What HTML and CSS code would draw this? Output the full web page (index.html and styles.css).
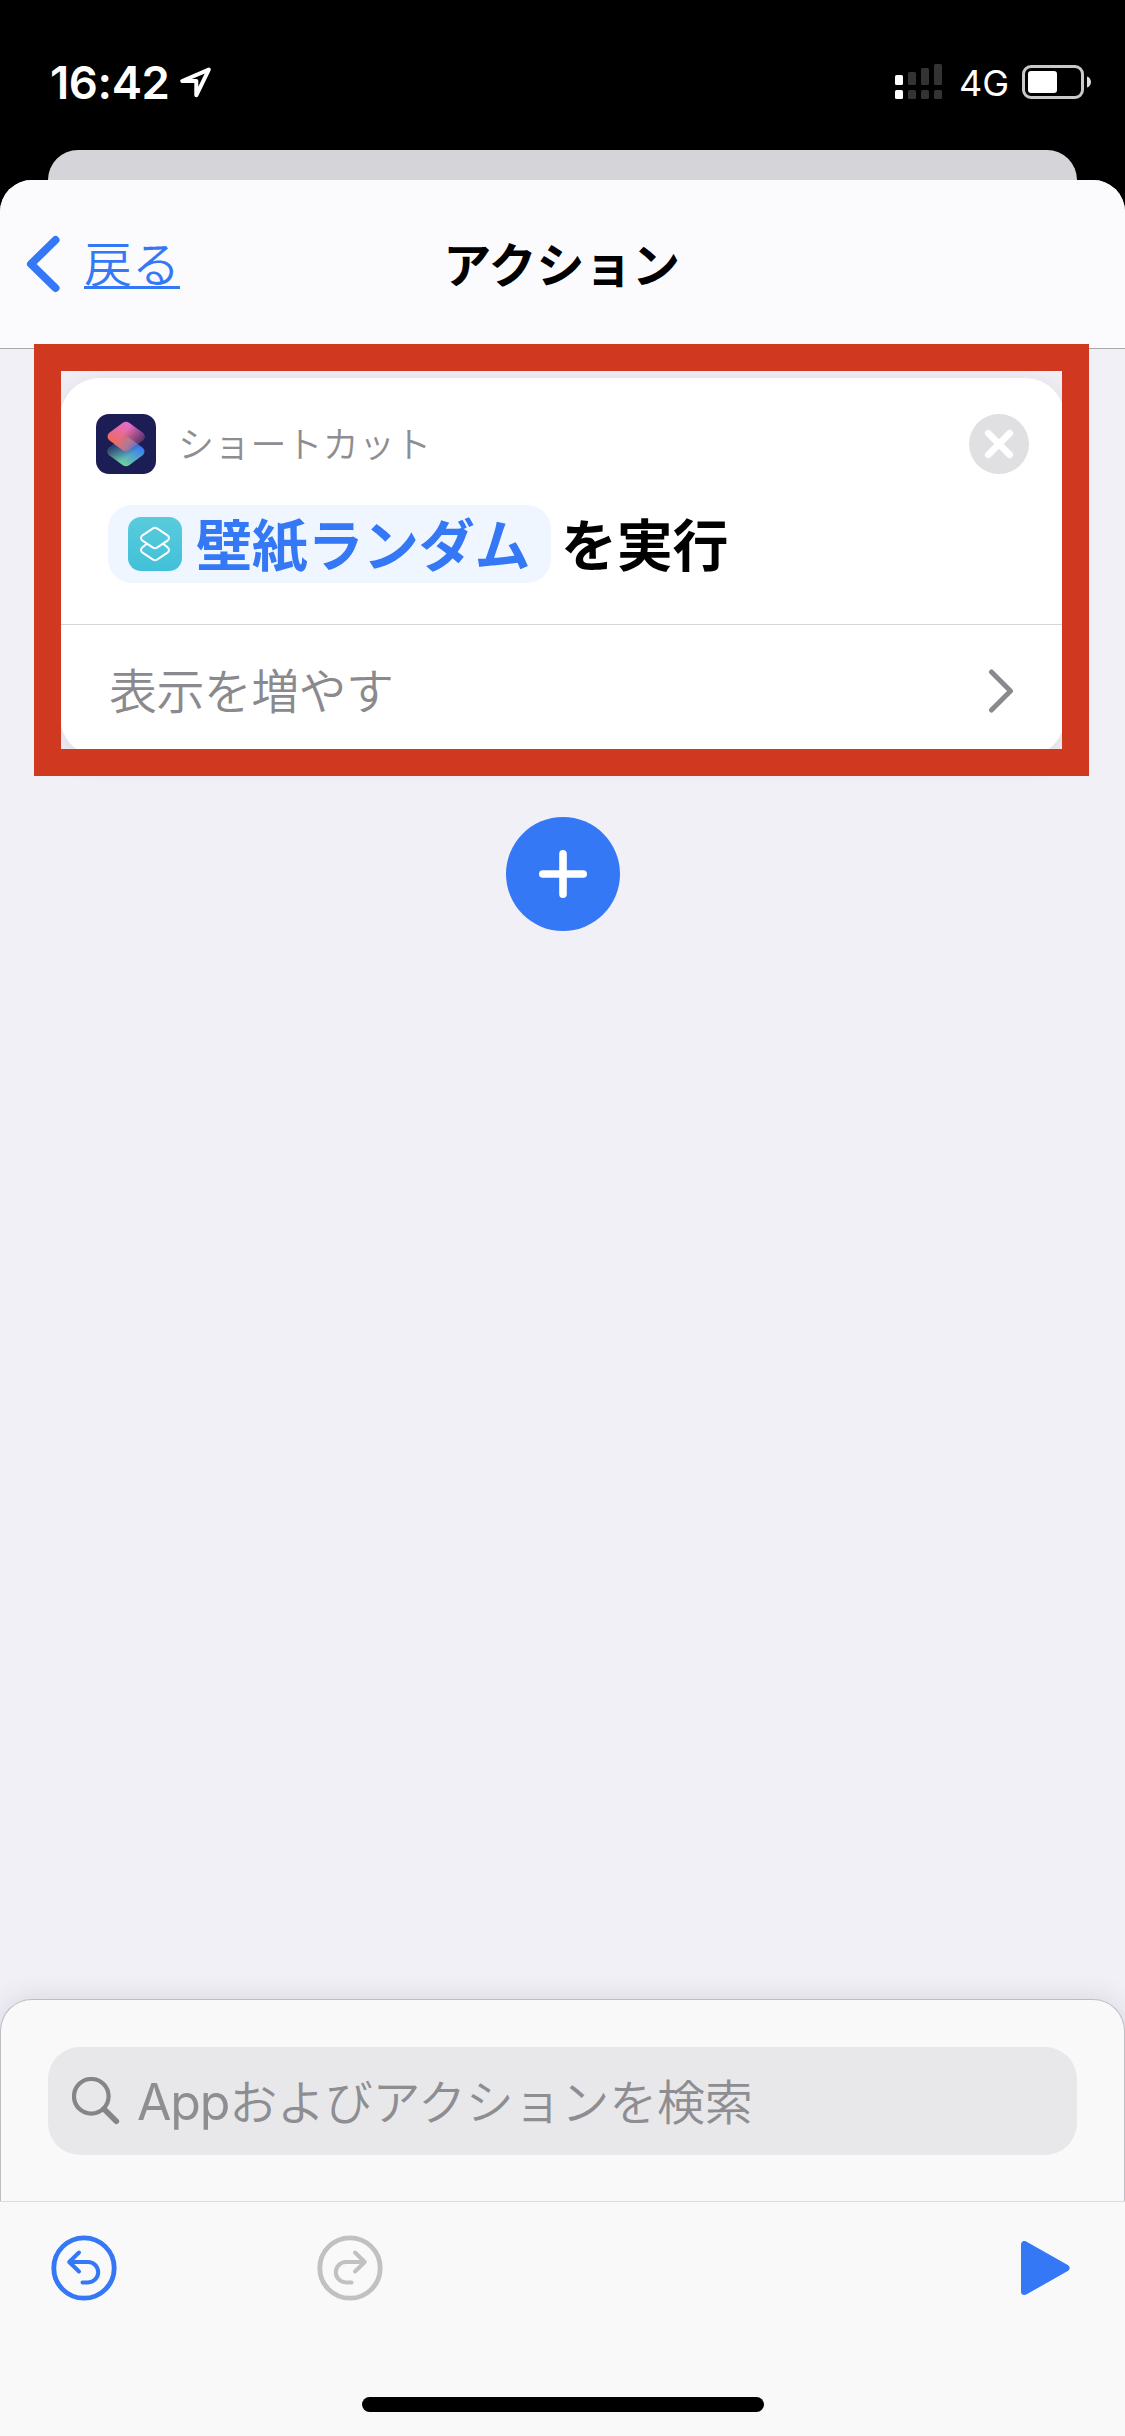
FILE: index.html
```html
<!DOCTYPE html>
<html lang="ja">
<head>
    <meta charset="UTF-8">
    <meta name="viewport" content="width=device-width, initial-scale=1.0">
    <title>アクション</title>
    <link rel="stylesheet" href="styles.css">
</head>
<body>
    <header class="status-bar">
        <div class="status-left">
            <span class="time">16:42</span>
            <svg class="location" width="34" height="34" viewBox="0 0 34 34">
                <path d="M30.8 4.6 L4.2 16 H18.3 V30.3 Z" />
            </svg>
        </div>
        <div class="status-right">
            <svg width="48" height="36" viewBox="0 0 48 36">
                <g fill="#fff">
                    <rect x="0" y="11" width="8" height="10" rx="1.5" />
                    <rect x="0" y="26" width="8" height="9" rx="1.5" />
                </g>
                <g fill="#333">
                    <rect x="13" y="8" width="8" height="13" rx="1.5" />
                    <rect x="26" y="4" width="8" height="17" rx="1.5" />
                    <rect x="39" y="0" width="8" height="21" rx="1.5" />
                    <rect x="13" y="26" width="8" height="9" rx="1.5" />
                    <rect x="26" y="26" width="8" height="9" rx="1.5" />
                    <rect x="39" y="26" width="8" height="9" rx="1.5" />
                </g>
            </svg>
            <span class="network">4G</span>
            <svg width="70" height="34" viewBox="0 0 70 34">
                <rect x="1.5" y="1.5" width="59" height="31" rx="7.5" fill="none" stroke="#c9c9c9" stroke-width="3" />
                <rect x="6" y="6" width="29" height="22" rx="3" fill="#fff" />
                <path d="M65 11.5 C70.3 13 70.3 21 65 22.5 Z" fill="#ddd" />
            </svg>
        </div>
    </header>

    <div class="sheet-behind"></div>

    <main class="sheet">
        <nav class="nav-bar">
            <a class="back" href="#">
                <svg width="34" height="58" viewBox="0 0 34 58">
                    <path d="M29.5 5 L5 29 L29.5 53" />
                </svg>
                <span class="back-label">戻る</span>
            </a>
            <h1 class="title">アクション</h1>
        </nav>

        <section class="workspace">
            <div class="action">
                <div class="card">
                    <div class="card-header">
                        <svg class="app-icon" width="60" height="60" viewBox="0 0 60 60">
                            <defs>
                                <linearGradient id="topLayer" x1="0.7" y1="0" x2="0.25" y2="0.8">
                                    <stop offset="0" stop-color="#e36bdc" />
                                    <stop offset="1" stop-color="#ee6b58" />
                                </linearGradient>
                                <linearGradient id="topFade" x1="0.45" y1="0.4" x2="0.95" y2="0.7">
                                    <stop offset="0" stop-color="#1d1d55" stop-opacity="0" />
                                    <stop offset="1" stop-color="#1d1d55" stop-opacity="0.75" />
                                </linearGradient>
                                <linearGradient id="bottomLayer" x1="0.8" y1="0.3" x2="0.35" y2="0.95">
                                    <stop offset="0" stop-color="#3a7cf3" />
                                    <stop offset="1" stop-color="#70d596" />
                                </linearGradient>
                                <linearGradient id="bottomFade" x1="0.1" y1="0.35" x2="0.45" y2="0.75">
                                    <stop offset="0" stop-color="#1d1d55" stop-opacity="0.75" />
                                    <stop offset="1" stop-color="#1d1d55" stop-opacity="0" />
                                </linearGradient>
                                <linearGradient id="overlap" x1="0" y1="0.3" x2="1" y2="0.7">
                                    <stop offset="0" stop-color="#ec6d66" />
                                    <stop offset="0.55" stop-color="#b57794" />
                                    <stop offset="1" stop-color="#5b76c8" />
                                </linearGradient>
                            </defs>
                            <rect width="60" height="60" rx="13" fill="#1d1d55" />
                            <path d="M26.5 24 Q30 21.5 33.5 24 L47 34 Q50 37.5 47 41 L33.5 51 Q30 53.5 26.5 51 L13 41 Q10 37.5 13 34 Z" fill="url(#bottomLayer)" />
                            <path d="M26.5 24 Q30 21.5 33.5 24 L47 34 Q50 37.5 47 41 L33.5 51 Q30 53.5 26.5 51 L13 41 Q10 37.5 13 34 Z" fill="url(#bottomFade)" />
                            <path d="M26.5 9 Q30 6.5 33.5 9 L47 19 Q50 22.5 47 26 L33.5 36 Q30 38.5 26.5 36 L13 26 Q10 22.5 13 19 Z" fill="url(#topLayer)" />
                            <path d="M26.5 9 Q30 6.5 33.5 9 L47 19 Q50 22.5 47 26 L33.5 36 Q30 38.5 26.5 36 L13 26 Q10 22.5 13 19 Z" fill="url(#topFade)" />
                            <path d="M26.5 24 Q30 21.5 33.5 24 L41.6 30 L33.5 36 Q30 38.5 26.5 36 L18.4 30 Z" fill="url(#overlap)" />
                        </svg>
                        <span class="app-name">ショートカット</span>
                        <svg class="close" width="60" height="60" viewBox="0 0 60 60">
                            <circle cx="30" cy="30" r="30" />
                            <path d="M19.2 19.2 L40.8 40.8 M40.8 19.2 L19.2 40.8" />
                        </svg>
                    </div>
                    <div class="card-body">
                        <span class="token">
                            <svg width="54" height="54" viewBox="0 0 54 54">
                                <defs>
                                    <linearGradient id="teal" x1="0" y1="0" x2="0" y2="1">
                                        <stop offset="0" stop-color="#5acbdc" />
                                        <stop offset="1" stop-color="#41c1d9" />
                                    </linearGradient>
                                </defs>
                                <rect width="54" height="54" rx="13" fill="url(#teal)" />
                                <g class="layers">
                                    <path d="M25 11.3 Q27 10.3 29 11.3 L39.5 18.3 Q42.5 21 39.5 23.7 L29 30.7 Q27 31.7 25 30.7 L14.5 23.7 Q11.5 21 14.5 18.3 Z" />
                                    <path d="M18.3 27.2 L14.5 30.2 Q11.5 33 14.5 35.7 L25 42.7 Q27 43.7 29 42.7 L39.5 35.7 Q42.5 33 39.5 30.2 L35.7 27.2" />
                                </g>
                            </svg>
                            <span class="token-name">壁紙ランダム</span>
                        </span>
                        <span class="verb">を実行</span>
                    </div>
                    <div class="card-more">
                        <span class="more-label">表示を増やす</span>
                        <svg width="26" height="44" viewBox="0 0 26 44">
                            <path d="M3.5 3 L22.5 22 L3.5 41" />
                        </svg>
                    </div>
                </div>
                <div class="highlight"></div>
            </div>

            <button class="add">
                <svg width="48" height="48" viewBox="0 0 48 48">
                    <path d="M24 3.8 V44.2 M3.8 24 H44.2" />
                </svg>
            </button>
        </section>

        <section class="search-panel">
            <div class="search">
                <svg width="48" height="48" viewBox="0 0 48 48">
                    <circle cx="19.3" cy="19.3" r="17.3" />
                    <path d="M32 32 L44.3 44.3" />
                </svg>
                <span class="placeholder"><span class="latin">App</span>およびアクションを検索</span>
            </div>
        </section>

        <footer class="toolbar">
            <div class="tools">
                <svg class="tool undo" width="66" height="66" viewBox="0 0 66 66">
                    <circle cx="33" cy="33" r="30.2" />
                    <path class="arrow" d="M28 17.5 L18.2 27 L28 36.5 M19 27 H37 A10.2 10.2 0 0 1 37 47.4 H31.5" />
                </svg>
                <svg class="tool redo" width="66" height="66" viewBox="0 0 66 66">
                    <circle cx="33" cy="33" r="30.2" />
                    <path class="arrow" d="M38 17.5 L47.8 27 L38 36.5 M47 27 H29 A10.2 10.2 0 0 0 29 47.4 H34.5" />
                </svg>
                <svg class="play" width="49" height="54" viewBox="0 0 49 54">
                    <path d="M3.5 3.5 V50.5 L45 27 Z" />
                </svg>
            </div>
            <div class="home-indicator"></div>
        </footer>
    </main>
</body>
</html>
```

FILE: styles.css
```css
* {
    box-sizing: border-box;
}

body {
    margin: 0;
    width: 1125px;
    height: 2436px;
    display: flex;
    flex-direction: column;
    background: #000;
    color: #000;
    font-family: "Noto Sans CJK JP", sans-serif;
    overflow: hidden;
}

svg {
    display: block;
    flex-shrink: 0;
}

/* Status bar */
.status-bar {
    height: 150px;
    padding: 0 33px 0 50px;
    display: flex;
    justify-content: space-between;
    color: #fff;
    font-family: Inter, sans-serif;
}

.status-left,
.status-right {
    display: flex;
    align-items: center;
    height: 100px;
    margin-top: 32px;
}

.status-left {
    gap: 7px;
}

.time {
    font-size: 45.5px;
    font-weight: 600;
    width: 121px;
    letter-spacing: -0.4px;
    white-space: nowrap;
}

.location {
    fill: none;
    stroke: #fff;
    stroke-width: 4;
    stroke-linejoin: round;
}

.network {
    font-size: 36px;
    font-weight: 400;
    width: 47px;
    margin: 2px 16px 0 16px;
}

/* Sheets */
.sheet-behind {
    height: 30px;
    margin: 0 48px;
    background: #d5d4d9;
    border-radius: 30px 30px 0 0;
}

.sheet {
    flex: 1;
    display: flex;
    flex-direction: column;
    background: #f1f0f6;
    border-radius: 32px 32px 0 0;
    overflow: hidden;
}

.nav-bar {
    height: 169px;
    display: grid;
    grid-template-columns: 1fr auto 1fr;
    align-items: center;
    padding: 0 26px;
    background: #fbfbfd;
    border-bottom: 1px solid #a9a9ae;
}

.back {
    display: flex;
    align-items: center;
    gap: 24px;
    color: #3478f6;
    text-decoration: none;
}

.back path {
    fill: none;
    stroke: #3478f6;
    stroke-width: 8;
    stroke-linecap: round;
    stroke-linejoin: round;
}

.back-label {
    padding-bottom: 3px;
    font-size: 48px;
    font-weight: 350;
    line-height: 44px;
    border-bottom: 3px solid #3478f6;
}

.title {
    margin: 0 2px 5px 0;
    font-size: 48px;
    font-weight: 700;
    line-height: 60px;
    letter-spacing: -0.2px;
}

/* Editor */
.workspace {
    flex: 1;
    padding: 29px 60px 0;
}

.action {
    position: relative;
}

.card {
    height: 379px;
    background: #fff;
    border-radius: 40px;
    box-shadow: 0 4px 28px rgba(60, 55, 90, 0.12);
}

/* Red frame laid over the card */
.highlight {
    position: absolute;
    top: -34px;
    left: -26px;
    width: 1055px;
    height: 432px;
    border: 27px solid #d03920;
}

.card-header {
    display: flex;
    align-items: center;
    padding: 36px 36px 0;
}

.app-name {
    flex: 1;
    margin: 0 0 3px 22px;
    font-size: 36px;
    font-weight: 350;
    line-height: 57px;
    letter-spacing: 0.2px;
    color: #8e8e92;
}

.close circle {
    fill: #e0e0e2;
}

.close path {
    stroke: #fff;
    stroke-width: 6.6;
    stroke-linecap: round;
}

.card-body {
    display: flex;
    align-items: center;
    height: 150px;
    padding: 0 48px 10px;
    font-size: 56px;
    font-weight: 700;
    letter-spacing: -0.3px;
}

.token {
    display: flex;
    align-items: center;
    gap: 14px;
    width: 443px;
    height: 78px;
    padding-left: 20px;
    border-radius: 24px;
    background: #eff6ff;
    color: #3478f6;
    white-space: nowrap;
}

.token-name,
.verb {
    padding-bottom: 5px;
    line-height: 73px;
}

.layers {
    fill: none;
    stroke: #fff;
    stroke-width: 2;
    stroke-linejoin: round;
    stroke-linecap: round;
}

.verb {
    margin-left: 10px;
}

.card-more {
    display: flex;
    align-items: center;
    justify-content: space-between;
    height: 133px;
    padding: 0 51px 0 49px;
    border-top: 1px solid #d6d6d8;
    color: #8a8a8e;
    font-size: 48px;
    font-weight: 350;
}

.more-label {
    padding-bottom: 6px;
    letter-spacing: -0.6px;
}

.card-more path {
    fill: none;
    stroke: #8a8a8e;
    stroke-width: 5;
    stroke-linecap: round;
    stroke-linejoin: round;
}

.add {
    display: flex;
    align-items: center;
    justify-content: center;
    width: 114px;
    height: 114px;
    margin: 60px auto 0;
    padding: 0;
    border: none;
    border-radius: 50%;
    background: #3478f6;
}

.add path {
    stroke: #fff;
    stroke-width: 7.6;
    stroke-linecap: round;
}

/* Search */
.search-panel {
    height: 202px;
    padding: 47px 47px 0;
    background: #f9f9f9;
    border: 1px solid #bdbdc2;
    border-bottom: none;
    border-radius: 32px 32px 0 0;
    box-shadow: 0 0 28px rgba(60, 55, 90, 0.14);
}

.search {
    display: flex;
    align-items: center;
    gap: 17px;
    height: 108px;
    padding-left: 24px;
    border-radius: 32px;
    background: #e8e8ea;
    color: #8e8e92;
    font-size: 48px;
    font-weight: 350;
}

.search svg {
    fill: none;
    stroke: #858589;
    stroke-width: 4.2;
}

.search path {
    stroke-width: 5.6;
    stroke-linecap: round;
}

.placeholder {
    padding-bottom: 2px;
    line-height: 106px;
    letter-spacing: -0.2px;
    white-space: nowrap;
}

.latin {
    font-family: Inter, sans-serif;
    font-size: 50px;
    font-weight: 400;
    letter-spacing: -1.2px;
}

/* Toolbar */
.toolbar {
    height: 235px;
    background: #f9f9f9;
    border-top: 1px solid #dcdcde;
}

.tools {
    display: flex;
    align-items: center;
    padding: 33px 55px 0 51px;
}

.tool {
    fill: none;
    stroke-width: 4.8;
}

.arrow {
    stroke-width: 4;
    stroke-linecap: round;
    stroke-linejoin: round;
}

.undo {
    stroke: #3478f6;
}

.redo {
    stroke: #c1c1c1;
    margin-left: 200px;
}

.play {
    margin-left: auto;
    fill: #3478f6;
    stroke: #3478f6;
    stroke-width: 7;
    stroke-linejoin: round;
}

.home-indicator {
    width: 402px;
    height: 15px;
    margin: 96px auto 0;
    border-radius: 8px;
    background: #000;
}
```
